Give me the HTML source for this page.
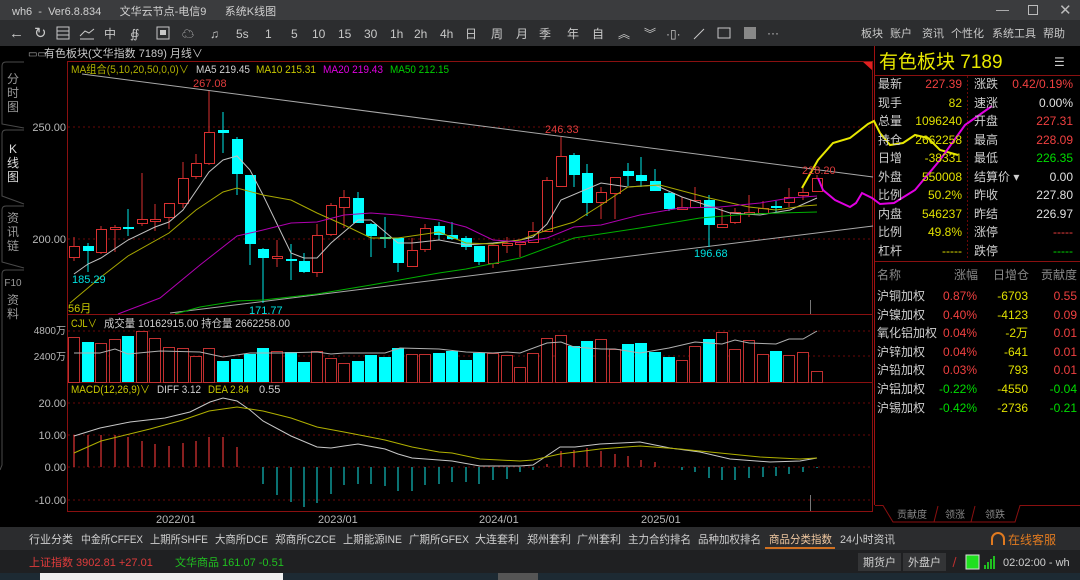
<!DOCTYPE html>
<html><head><meta charset="utf-8">
<style>
*{margin:0;padding:0;box-sizing:border-box}
body{width:1080px;height:580px;overflow:hidden;background:#000;font-family:"Liberation Sans","Noto Sans CJK SC",sans-serif;position:relative}
.a{position:absolute;white-space:nowrap}
svg text{font-family:"Liberation Sans","Noto Sans CJK SC",sans-serif}
</style></head><body>
<div class="a" style="left:0;top:0;width:1080px;height:20px;background:#3b3c3e"></div>
<div class="a" style="left:0;top:20px;width:1080px;height:26px;background:#2c2d2f"></div>
<div class="a" style="left:12px;top:3px;font-size:11px;color:#d0d0d0">wh6&nbsp; - &nbsp;Ver6.8.834&nbsp;&nbsp;&nbsp;&nbsp;&nbsp;&nbsp;文华云节点-电信9&nbsp;&nbsp;&nbsp;&nbsp;&nbsp;&nbsp;系统K线图</div>
<div class="a" style="left:996px;top:2px;font-size:13px;color:#bbb">—</div>
<div class="a" style="left:1028px;top:5px;width:10px;height:10px;border:1px solid #bbb"></div>
<div class="a" style="left:1059px;top:1px;font-size:15px;color:#bbb">✕</div>
<svg class="a" style="left:0;top:0" width="1080" height="580" viewBox="0 0 1080 580">
<g fill="#c8c8c8" font-size="12">
<text x="9" y="38" font-size="15">←</text>
<text x="34" y="38" font-size="15">↻</text>
<rect x="57" y="27" width="12" height="12" fill="none" stroke="#c8c8c8"/><line x1="57" y1="31" x2="69" y2="31" stroke="#c8c8c8"/><line x1="57" y1="35" x2="69" y2="35" stroke="#c8c8c8"/>
<polyline points="80,36 85,31 89,33 94,29" fill="none" stroke="#c8c8c8"/><line x1="80" y1="39" x2="94" y2="39" stroke="#c8c8c8"/>
<text x="104" y="38">中</text><text x="130" y="38">∯</text>
<rect x="157" y="27" width="12" height="12" fill="none" stroke="#c8c8c8"/><rect x="160" y="30" width="6" height="5"/>
<text x="182" y="38">☁</text><text x="210" y="38">♫</text>
<text x="236" y="38">5s</text><text x="265" y="38">1</text><text x="291" y="38">5</text><text x="312" y="38">10</text><text x="338" y="38">15</text><text x="364" y="38">30</text><text x="390" y="38">1h</text><text x="414" y="38">2h</text><text x="440" y="38">4h</text>
<text x="465" y="38">日</text><text x="491" y="38">周</text><text x="516" y="38">月</text><text x="539" y="38">季</text><text x="567" y="38">年</text><text x="592" y="38">自</text>
<text x="618" y="38">︽</text><text x="644" y="38">︾</text><text x="666" y="38">·▯·</text>
<line x1="694" y1="39" x2="704" y2="29" stroke="#c8c8c8"/>
<rect x="718" y="28" width="12" height="10" fill="none" stroke="#c8c8c8"/>
<rect x="744" y="27" width="12" height="12" fill="#888"/>
<text x="767" y="37">···</text>
<g font-size="11"><text x="861" y="37">板块</text><text x="890" y="37">账户</text><text x="922" y="37">资讯</text><text x="951" y="37">个性化</text><text x="992" y="37">系统工具</text><text x="1043" y="37">帮助</text></g>
</g>
<text x="28" y="57" font-size="10" fill="#aaa">▭▭</text>
<text x="44" y="57" font-size="11" fill="#c8c8c8">有色板块(文华指数  7189)    月线∨</text>
<line x1="67" y1="61.5" x2="873" y2="61.5" stroke="#a01010"/>
<polygon points="862,61 873,61 873,71" fill="#e02020"/>
<rect x="67.5" y="61.5" width="805" height="450" fill="none" stroke="#8a1010"/>
<line x1="67" y1="314.5" x2="873" y2="314.5" stroke="#8a1010"/>
<line x1="67" y1="382.5" x2="873" y2="382.5" stroke="#8a1010"/>
<line x1="874.5" y1="46" x2="874.5" y2="505" stroke="#a01010"/>
<g stroke="#6a0808" stroke-dasharray="2,3">
<line x1="68" y1="127" x2="872" y2="127"/><line x1="68" y1="239" x2="872" y2="239"/>
<line x1="68" y1="331" x2="872" y2="331"/><line x1="68" y1="356" x2="872" y2="356"/>
<line x1="68" y1="403" x2="872" y2="403"/><line x1="68" y1="435" x2="872" y2="435"/><line x1="68" y1="467" x2="872" y2="467"/><line x1="68" y1="500" x2="872" y2="500"/>
</g>
<g font-size="11" fill="#b8b8b8" text-anchor="end">
<text x="66" y="131">250.00</text><text x="66" y="243">200.00</text>
<text x="66" y="334" font-size="10">4800万</text><text x="66" y="360" font-size="10">2400万</text>
<text x="66" y="407">20.00</text><text x="66" y="439">10.00</text><text x="66" y="471">0.00</text><text x="66" y="504">-10.00</text>
</g>
<g font-size="11" fill="#b8b8b8"><text x="156" y="523">2022/01</text><text x="318" y="523">2023/01</text><text x="479" y="523">2024/01</text><text x="641" y="523">2025/01</text></g>
<g font-size="11">
<text x="71" y="73" fill="#b0b000" textLength="118" lengthAdjust="spacingAndGlyphs">MA组合(5,10,20,50,0,0)∨</text>
<text x="196" y="73" fill="#d0d0d0" textLength="54" lengthAdjust="spacingAndGlyphs">MA5 219.45</text>
<text x="256" y="73" fill="#c8c800" textLength="60" lengthAdjust="spacingAndGlyphs">MA10 215.31</text>
<text x="323" y="73" fill="#e000e0" textLength="60" lengthAdjust="spacingAndGlyphs">MA20 219.43</text>
<text x="390" y="73" fill="#00d000" textLength="59" lengthAdjust="spacingAndGlyphs">MA50 212.15</text>
<text x="71" y="327" fill="#c8c800" textLength="26" lengthAdjust="spacingAndGlyphs">CJL∨</text>
<text x="104" y="327" fill="#d0d0d0" textLength="186" lengthAdjust="spacingAndGlyphs">成交量 10162915.00  持仓量 2662258.00</text>
<text x="71" y="393" fill="#c8c800" textLength="79" lengthAdjust="spacingAndGlyphs">MACD(12,26,9)∨</text>
<text x="157" y="393" fill="#d0d0d0" textLength="44" lengthAdjust="spacingAndGlyphs">DIFF 3.12</text>
<text x="208" y="393" fill="#c8c800" textLength="41" lengthAdjust="spacingAndGlyphs">DEA 2.84</text>
<text x="259" y="393" fill="#d0d0d0">0.55</text>
</g>
<line x1="82" y1="74" x2="873" y2="177" stroke="#a8a8a8"/>
<line x1="170" y1="313" x2="873" y2="226" stroke="#a8a8a8"/>
<g stroke-width="1">
<g stroke="#d83030" fill="#000">
<line x1="74" y1="237" x2="74" y2="261"/><rect x="69.5" y="246.5" width="10" height="11"/>
<line x1="101" y1="226" x2="101" y2="254"/><rect x="96.5" y="229.5" width="10" height="23"/>
<line x1="115" y1="225" x2="115" y2="252"/><rect x="110.5" y="227.5" width="10" height="2"/>
<line x1="142" y1="173" x2="142" y2="226"/><rect x="137.5" y="219.5" width="10" height="4"/>
<line x1="155" y1="204" x2="155" y2="231"/><rect x="150.5" y="219.5" width="10" height="2"/>
<line x1="169" y1="203" x2="169" y2="229"/><rect x="164.5" y="203.5" width="10" height="14"/>
<line x1="183" y1="162" x2="183" y2="208"/><rect x="178.5" y="178.5" width="10" height="25"/>
<line x1="196" y1="154" x2="196" y2="179"/><rect x="191.5" y="163.5" width="10" height="13"/>
<line x1="209" y1="91" x2="209" y2="165"/><rect x="204.5" y="132.5" width="10" height="31"/>
<line x1="277" y1="240" x2="277" y2="267"/><rect x="272.5" y="256.5" width="10" height="2"/>
<line x1="317" y1="224" x2="317" y2="277"/><rect x="312.5" y="235.5" width="10" height="37"/>
<line x1="331" y1="203" x2="331" y2="236"/><rect x="326.5" y="205.5" width="10" height="29"/>
<line x1="344" y1="190" x2="344" y2="228"/><rect x="339.5" y="197.5" width="10" height="10"/>
<line x1="412" y1="238" x2="412" y2="267"/><rect x="407.5" y="250.5" width="10" height="16"/>
<line x1="425" y1="224" x2="425" y2="252"/><rect x="420.5" y="228.5" width="10" height="21"/>
<line x1="493" y1="245" x2="493" y2="268"/><rect x="488.5" y="245.5" width="10" height="18"/>
<line x1="507" y1="237" x2="507" y2="253"/><rect x="502.5" y="243.5" width="10" height="2"/>
<line x1="520" y1="241" x2="520" y2="257"/><rect x="515.5" y="242.5" width="10" height="2"/>
<line x1="533" y1="222" x2="533" y2="243"/><rect x="528.5" y="231.5" width="10" height="11"/>
<line x1="547" y1="177" x2="547" y2="231"/><rect x="542.5" y="180.5" width="10" height="51"/>
<line x1="561" y1="137" x2="561" y2="186"/><rect x="556.5" y="156.5" width="10" height="30"/>
<line x1="601" y1="187" x2="601" y2="219"/><rect x="596.5" y="192.5" width="10" height="10"/>
<line x1="615" y1="177" x2="615" y2="219"/><rect x="610.5" y="177.5" width="10" height="16"/>
<line x1="682" y1="197" x2="682" y2="210"/><rect x="677.5" y="207.5" width="10" height="2"/>
<line x1="695" y1="187" x2="695" y2="208"/><rect x="690.5" y="200.5" width="10" height="7"/>
<line x1="722" y1="208" x2="722" y2="228"/><rect x="717.5" y="224.5" width="10" height="3"/>
<line x1="735" y1="208" x2="735" y2="224"/><rect x="730.5" y="212.5" width="10" height="10"/>
<line x1="749" y1="195" x2="749" y2="217"/><rect x="744.5" y="212.5" width="10" height="2"/>
<line x1="763" y1="201" x2="763" y2="215"/><rect x="758.5" y="208.5" width="10" height="5"/>
<line x1="789" y1="188" x2="789" y2="207"/><rect x="784.5" y="197.5" width="10" height="5"/>
<line x1="803" y1="185" x2="803" y2="200"/><rect x="798.5" y="192.5" width="10" height="3"/>
<line x1="817" y1="175" x2="817" y2="191"/><rect x="812.5" y="178.5" width="10" height="13"/>
</g>
<g stroke="#00e8e8" fill="#00ffff">
<line x1="88" y1="243" x2="88" y2="272"/><rect x="83" y="246" width="11" height="5" stroke="none"/>
<line x1="128" y1="209" x2="128" y2="236"/><rect x="123" y="227" width="11" height="2" stroke="none"/>
<line x1="223" y1="112" x2="223" y2="153"/><rect x="218" y="130" width="11" height="3" stroke="none"/>
<line x1="237" y1="137" x2="237" y2="195"/><rect x="232" y="139" width="11" height="35" stroke="none"/>
<line x1="250" y1="175" x2="250" y2="265"/><rect x="245" y="175" width="11" height="69" stroke="none"/>
<line x1="263" y1="248" x2="263" y2="303"/><rect x="258" y="249" width="11" height="9" stroke="none"/>
<line x1="291" y1="244" x2="291" y2="280"/><rect x="286" y="259" width="11" height="2" stroke="none"/>
<line x1="304" y1="253" x2="304" y2="273"/><rect x="299" y="261" width="11" height="11" stroke="none"/>
<line x1="358" y1="192" x2="358" y2="223"/><rect x="353" y="198" width="11" height="25" stroke="none"/>
<line x1="371" y1="223" x2="371" y2="257"/><rect x="366" y="224" width="11" height="12" stroke="none"/>
<line x1="385" y1="217" x2="385" y2="248"/><rect x="380" y="237" width="11" height="2" stroke="none"/>
<line x1="398" y1="238" x2="398" y2="272"/><rect x="393" y="238" width="11" height="25" stroke="none"/>
<line x1="439" y1="222" x2="439" y2="240"/><rect x="434" y="226" width="11" height="9" stroke="none"/>
<line x1="452" y1="222" x2="452" y2="240"/><rect x="447" y="235" width="11" height="4" stroke="none"/>
<line x1="466" y1="236" x2="466" y2="250"/><rect x="461" y="238" width="11" height="9" stroke="none"/>
<line x1="479" y1="246" x2="479" y2="265"/><rect x="474" y="246" width="11" height="16" stroke="none"/>
<line x1="574" y1="153" x2="574" y2="187"/><rect x="569" y="155" width="11" height="20" stroke="none"/>
<line x1="587" y1="164" x2="587" y2="216"/><rect x="582" y="173" width="11" height="30" stroke="none"/>
<line x1="628" y1="163" x2="628" y2="186"/><rect x="623" y="171" width="11" height="5" stroke="none"/>
<line x1="641" y1="157" x2="641" y2="187"/><rect x="636" y="175" width="11" height="6" stroke="none"/>
<line x1="655" y1="169" x2="655" y2="191"/><rect x="650" y="181" width="11" height="10" stroke="none"/>
<line x1="669" y1="192" x2="669" y2="211"/><rect x="664" y="193" width="11" height="16" stroke="none"/>
<line x1="709" y1="195" x2="709" y2="247"/><rect x="704" y="200" width="11" height="25" stroke="none"/>
<line x1="776" y1="201" x2="776" y2="213"/><rect x="771" y="206" width="11" height="2" stroke="none"/>
</g>
</g>
<g fill="none" stroke-width="1">
<polyline stroke="#c0c0c0" points="74,274 88,264 101,258 128,240 155,227 169,222 183,210 209,172 223,160 237,156 250,170 263,195 291,253 304,258 317,258 331,243 358,220 371,220 398,243 412,243 439,240 466,245 493,243 520,240 533,237 547,224 561,200 601,183 628,187 655,185 682,197 709,206 730,213 760,215 790,210 817,198"/>
<polyline stroke="#a8a800" points="70,303 101,277 128,256 169,233 196,210 223,192 237,188 263,195 291,200 317,213 344,225 371,238 398,238 439,232 466,243 493,244 520,240 547,230 574,222 601,205 628,187 660,185 709,198 749,207 776,210 803,206 817,205"/>
<polyline stroke="#b000b0" points="118,314 160,298 200,265 237,236 263,230 291,223 317,222 344,215 371,213 398,215 439,220 466,227 493,240 520,242 547,238 574,227 601,225 640,215 680,208 720,207 760,203 790,198 817,196"/>
<polyline stroke="#00b000" points="175,314 200,307 237,301 263,300 317,294 371,285 439,273 466,269 520,258 574,238 640,228 700,218 749,214 780,213 817,212"/>
<polyline stroke="#e8e800" stroke-width="2" points="802,188 818,160 833,143 850,138 868,124 874,121 880,133 890,145 903,143 915,135 928,138 940,150 958,155"/>
<polyline stroke="#e000e0" stroke-width="2" points="818,178 823,190 835,200 850,207 856,203 862,193 872,198 880,204 894,203 915,190 940,160 965,125 992,106"/>
</g>
<g font-size="11">
<text x="193" y="87" fill="#e03c3c">267.08</text>
<text x="545" y="133" fill="#e03c3c">246.33</text>
<text x="802" y="174" fill="#e03c3c">228.20</text>
<text x="72" y="283" fill="#00e0e0">185.29</text>
<text x="249" y="314" fill="#00e0e0">171.77</text>
<text x="694" y="257" fill="#00e0e0">196.68</text>
<text x="68" y="312" fill="#c8c800">56月</text>
</g>
<line x1="810.5" y1="300" x2="810.5" y2="314" stroke="#777"/>
<line x1="810.5" y1="495" x2="810.5" y2="511" stroke="#777"/>
<g stroke="#c03030" fill="#000">
<rect x="68.5" y="337.5" width="11" height="45"/><rect x="95.5" y="343.5" width="11" height="39"/><rect x="109.5" y="339.5" width="11" height="43"/>
<rect x="136.5" y="331.5" width="11" height="51"/><rect x="149.5" y="338.5" width="11" height="44"/><rect x="163.5" y="347.5" width="11" height="35"/>
<rect x="177.5" y="348.5" width="11" height="34"/><rect x="190.5" y="356.5" width="11" height="26"/><rect x="203.5" y="348.5" width="11" height="34"/>
<rect x="271.5" y="351.5" width="11" height="31"/><rect x="311.5" y="351.5" width="11" height="31"/><rect x="325.5" y="358.5" width="11" height="24"/><rect x="338.5" y="363.5" width="11" height="19"/>
<rect x="406.5" y="354.5" width="11" height="28"/><rect x="419.5" y="354.5" width="11" height="28"/>
<rect x="487.5" y="353.5" width="11" height="29"/><rect x="501.5" y="355.5" width="11" height="27"/><rect x="514.5" y="367.5" width="11" height="15"/><rect x="527.5" y="353.5" width="11" height="29"/>
<rect x="541.5" y="338.5" width="11" height="44"/><rect x="555.5" y="335.5" width="11" height="47"/><rect x="595.5" y="339.5" width="11" height="43"/><rect x="609.5" y="349.5" width="11" height="33"/>
<rect x="676.5" y="360.5" width="11" height="22"/><rect x="689.5" y="346.5" width="11" height="36"/><rect x="716.5" y="332.5" width="11" height="50"/><rect x="729.5" y="349.5" width="11" height="33"/>
<rect x="743.5" y="340.5" width="11" height="42"/><rect x="757.5" y="354.5" width="11" height="28"/><rect x="783.5" y="355.5" width="11" height="27"/><rect x="797.5" y="352.5" width="11" height="30"/><rect x="811.5" y="371.5" width="11" height="11"/>
</g>
<g fill="#00ffff">
<rect x="82" y="342" width="12" height="40"/><rect x="122" y="336" width="12" height="46"/><rect x="217" y="361" width="12" height="21"/>
<rect x="231" y="359" width="12" height="23"/><rect x="244" y="354" width="12" height="28"/><rect x="257" y="348" width="12" height="34"/>
<rect x="285" y="352" width="12" height="30"/><rect x="298" y="362" width="12" height="20"/><rect x="352" y="361" width="12" height="21"/>
<rect x="365" y="355" width="12" height="27"/><rect x="379" y="357" width="12" height="25"/><rect x="392" y="348" width="12" height="34"/>
<rect x="433" y="353" width="12" height="29"/><rect x="446" y="351" width="12" height="31"/><rect x="460" y="360" width="12" height="22"/><rect x="473" y="353" width="12" height="29"/>
<rect x="568" y="346" width="12" height="36"/><rect x="581" y="341" width="12" height="41"/><rect x="622" y="344" width="12" height="38"/><rect x="635" y="343" width="12" height="39"/>
<rect x="649" y="352" width="12" height="30"/><rect x="663" y="357" width="12" height="25"/><rect x="703" y="339" width="12" height="43"/><rect x="770" y="351" width="12" height="31"/>
</g>
<polyline fill="none" stroke="#b0b0b0" points="74,353 100,353 115,349 128,354 160,351 200,352 223,357 250,353 280,353 317,352 331,354 344,353 385,353 400,348 439,349 466,352 493,353 507,352 520,353 547,343 561,342 574,347 601,349 615,349 640,353 669,348 695,342 722,344 735,340 749,343 776,344 789,339 803,339 817,331"/>
<g stroke="#d03030" stroke-width="1.3">
<line x1="74" y1="467" x2="74" y2="435"/><line x1="88" y1="467" x2="88" y2="435"/><line x1="101" y1="467" x2="101" y2="435"/><line x1="115" y1="467" x2="115" y2="435"/>
<line x1="128" y1="467" x2="128" y2="437"/><line x1="142" y1="467" x2="142" y2="441"/><line x1="155" y1="467" x2="155" y2="444"/><line x1="169" y1="467" x2="169" y2="446"/>
<line x1="183" y1="467" x2="183" y2="443"/><line x1="196" y1="467" x2="196" y2="441"/><line x1="209" y1="467" x2="209" y2="437"/><line x1="223" y1="467" x2="223" y2="437"/><line x1="237" y1="467" x2="237" y2="447"/>
<line x1="547" y1="467" x2="547" y2="464"/><line x1="561" y1="467" x2="561" y2="451"/><line x1="574" y1="467" x2="574" y2="450"/><line x1="587" y1="467" x2="587" y2="448"/>
<line x1="601" y1="467" x2="601" y2="451"/><line x1="615" y1="467" x2="615" y2="454"/><line x1="628" y1="467" x2="628" y2="456"/><line x1="641" y1="467" x2="641" y2="460"/><line x1="655" y1="467" x2="655" y2="462"/>
</g>
<g stroke="#10b0b0" stroke-width="1.3">
<line x1="263" y1="467" x2="263" y2="484"/><line x1="277" y1="467" x2="277" y2="495"/><line x1="291" y1="467" x2="291" y2="502"/><line x1="304" y1="467" x2="304" y2="507"/>
<line x1="317" y1="467" x2="317" y2="503"/><line x1="331" y1="467" x2="331" y2="494"/><line x1="344" y1="467" x2="344" y2="485"/><line x1="358" y1="467" x2="358" y2="484"/>
<line x1="371" y1="467" x2="371" y2="484"/><line x1="385" y1="467" x2="385" y2="486"/><line x1="398" y1="467" x2="398" y2="491"/><line x1="412" y1="467" x2="412" y2="491"/>
<line x1="425" y1="467" x2="425" y2="485"/><line x1="439" y1="467" x2="439" y2="484"/><line x1="452" y1="467" x2="452" y2="482"/><line x1="466" y1="467" x2="466" y2="482"/>
<line x1="479" y1="467" x2="479" y2="484"/><line x1="493" y1="467" x2="493" y2="480"/><line x1="507" y1="467" x2="507" y2="479"/><line x1="520" y1="467" x2="520" y2="472"/><line x1="533" y1="467" x2="533" y2="470"/>
<line x1="682" y1="467" x2="682" y2="470"/><line x1="695" y1="467" x2="695" y2="472"/><line x1="709" y1="467" x2="709" y2="478"/><line x1="722" y1="467" x2="722" y2="480"/>
<line x1="735" y1="467" x2="735" y2="480"/><line x1="749" y1="467" x2="749" y2="478"/><line x1="763" y1="467" x2="763" y2="477"/><line x1="776" y1="467" x2="776" y2="476"/>
<line x1="789" y1="467" x2="789" y2="474"/><line x1="803" y1="467" x2="803" y2="472"/><line x1="817" y1="467" x2="817" y2="468"/>
</g>
<polyline fill="none" stroke="#c8c8c8" points="74,436 100,428 130,422 165,418 190,412 210,402 223,398 237,401 250,410 263,421 291,436 317,447 331,448 344,446 358,444 385,449 398,454 412,458 439,460 452,461 480,466 520,466 533,465 560,447 575,447 600,444 640,442 670,448 700,452 730,459 770,462 800,461 817,458"/>
<polyline fill="none" stroke="#b0b000" points="74,453 101,441 150,429 183,420 209,411 237,407 263,411 291,418 317,427 344,432 385,440 412,447 439,452 452,453 480,459 520,461 533,460 560,454 600,449 640,446 680,449 720,453 760,457 800,459 817,458"/>
<g fill="none" stroke="#4a4a4a">
<path d="M24,62 L6,62 Q2,62 2,66 L2,124 L24,128"/>
<path d="M24,130 L6,130 Q2,130 2,134 L2,196 L24,204"/>
<path d="M24,206 L6,206 Q2,206 2,210 L2,262 L24,268"/>
<path d="M24,270 L6,270 Q2,270 2,274 L2,465 L0,470"/>
</g>
<g font-size="12" fill="#9a9a9a" text-anchor="middle">
<text x="13" y="83">分</text><text x="13" y="97">时</text><text x="13" y="111">图</text>
<text x="13" y="153" fill="#dcdcdc">K</text><text x="13" y="167" fill="#dcdcdc">线</text><text x="13" y="181" fill="#dcdcdc">图</text>
<text x="13" y="222">资</text><text x="13" y="236">讯</text><text x="13" y="250">链</text>
<text x="13" y="286" font-size="10">F10</text><text x="13" y="304">资</text><text x="13" y="318">料</text>
</g>
<text x="879" y="68" font-size="19" fill="#e8e800">有色板块  7189</text>
<text x="1054" y="66" font-size="12" fill="#ccc">☰</text>
<line x1="875" y1="75.5" x2="1080" y2="75.5" stroke="#8a1010"/>
<line x1="967.5" y1="76" x2="967.5" y2="260" stroke="#6a0808" stroke-dasharray="2,2"/>
<line x1="875" y1="261.5" x2="1080" y2="261.5" stroke="#8a1010"/>
<g font-size="12">
<g fill="#cfcfcf">
<text x="878" y="88">最新</text><text x="878" y="107">现手</text><text x="878" y="125">总量</text><text x="878" y="144">持仓</text><text x="878" y="162">日增</text>
<text x="878" y="181">外盘</text><text x="878" y="199">比例</text><text x="878" y="218">内盘</text><text x="878" y="236">比例</text><text x="878" y="255">杠杆</text>
<text x="974" y="88">涨跌</text><text x="974" y="107">速涨</text><text x="974" y="125">开盘</text><text x="974" y="144">最高</text><text x="974" y="162">最低</text>
<text x="974" y="181">结算价 ▾</text><text x="974" y="199">昨收</text><text x="974" y="218">昨结</text><text x="974" y="236">涨停</text><text x="974" y="255">跌停</text>
</g>
<g text-anchor="end">
<text x="962" y="88" fill="#f04040">227.39</text>
<g fill="#e0e000"><text x="962" y="107">82</text><text x="962" y="125">1096240</text><text x="962" y="144">2662258</text><text x="962" y="162">-38331</text><text x="962" y="181">550008</text><text x="962" y="199">50.2%</text><text x="962" y="218">546237</text><text x="962" y="236">49.8%</text><text x="962" y="255">-----</text></g>
<text x="1073" y="88" fill="#f04040">0.42/0.19%</text>
<text x="1073" y="107" fill="#e0e0e0">0.00%</text>
<text x="1073" y="125" fill="#f04040">227.31</text>
<text x="1073" y="144" fill="#f04040">228.09</text>
<text x="1073" y="162" fill="#00dd00">226.35</text>
<text x="1073" y="181" fill="#e0e0e0">0.00</text>
<text x="1073" y="199" fill="#e0e0e0">227.80</text>
<text x="1073" y="218" fill="#e0e0e0">226.97</text>
<text x="1073" y="236" fill="#f04040">-----</text>
<text x="1073" y="255" fill="#00dd00">-----</text>
</g>
<g fill="#888"><text x="877" y="279">名称</text><text x="978" y="279" text-anchor="end">涨幅</text><text x="1029" y="279" text-anchor="end">日增仓</text><text x="1077" y="279" text-anchor="end">贡献度</text></g>
<g fill="#cfcfcf"><text x="877" y="300">沪铜加权</text><text x="877" y="319">沪镍加权</text><text x="877" y="337">氧化铝加权</text><text x="877" y="356">沪锌加权</text><text x="877" y="374">沪铅加权</text><text x="877" y="393">沪铝加权</text><text x="877" y="412">沪锡加权</text></g>
<g text-anchor="end">
<g fill="#f04040"><text x="977" y="300">0.87%</text><text x="977" y="319">0.40%</text><text x="977" y="337">0.04%</text><text x="977" y="356">0.04%</text><text x="977" y="374">0.03%</text>
<text x="1077" y="300">0.55</text><text x="1077" y="319">0.09</text><text x="1077" y="337">0.01</text><text x="1077" y="356">0.01</text><text x="1077" y="374">0.01</text></g>
<g fill="#00dd00"><text x="977" y="393">-0.22%</text><text x="977" y="412">-0.42%</text><text x="1077" y="393">-0.04</text><text x="1077" y="412">-0.21</text></g>
<g fill="#e0e000"><text x="1028" y="300">-6703</text><text x="1028" y="319">-4123</text><text x="1028" y="337">-2万</text><text x="1028" y="356">-641</text><text x="1028" y="374">793</text><text x="1028" y="393">-4550</text><text x="1028" y="412">-2736</text></g>
</g>
</g>
<path d="M875,505.5 L883,505.5 L893,522 L1015,522 L1020,505.5 L1080,505.5" fill="none" stroke="#8a1010"/>
<line x1="938" y1="506" x2="934" y2="522" stroke="#8a1010"/><line x1="975" y1="506" x2="971" y2="522" stroke="#8a1010"/>
<g font-size="10" fill="#888"><text x="897" y="518">贡献度</text><text x="945" y="518">领涨</text><text x="985" y="518">领跌</text></g>
<rect x="0" y="527" width="1080" height="23" fill="#2b2c2e"/>
<rect x="0" y="550" width="1080" height="23" fill="#1f2022"/>
<rect x="0" y="573" width="1080" height="7" fill="#1d2a33"/>
<rect x="40" y="573" width="243" height="7" fill="#f0f0f0"/>
<rect x="498" y="573" width="40" height="7" fill="#555"/>
<g font-size="11" fill="#cfcfcf">
<text x="29" y="543" textLength="44" lengthAdjust="spacingAndGlyphs">行业分类</text>
<text x="81" y="543" textLength="62" lengthAdjust="spacingAndGlyphs">中金所CFFEX</text>
<text x="150" y="543" textLength="58" lengthAdjust="spacingAndGlyphs">上期所SHFE</text>
<text x="215" y="543" textLength="53" lengthAdjust="spacingAndGlyphs">大商所DCE</text>
<text x="275" y="543" textLength="61" lengthAdjust="spacingAndGlyphs">郑商所CZCE</text>
<text x="343" y="543" textLength="59" lengthAdjust="spacingAndGlyphs">上期能源INE</text>
<text x="409" y="543" textLength="60" lengthAdjust="spacingAndGlyphs">广期所GFEX</text>
<text x="475" y="543" textLength="44" lengthAdjust="spacingAndGlyphs">大连套利</text>
<text x="527" y="543" textLength="44" lengthAdjust="spacingAndGlyphs">郑州套利</text>
<text x="577" y="543" textLength="44" lengthAdjust="spacingAndGlyphs">广州套利</text>
<text x="628" y="543" textLength="63" lengthAdjust="spacingAndGlyphs">主力合约排名</text>
<text x="698" y="543" textLength="63" lengthAdjust="spacingAndGlyphs">品种加权排名</text>
<text x="769" y="543" fill="#f0c8a0" textLength="63" lengthAdjust="spacingAndGlyphs">商品分类指数</text>
<text x="840" y="543" textLength="55" lengthAdjust="spacingAndGlyphs">24小时资讯</text>
</g>
<rect x="765" y="547" width="70" height="2" fill="#d07020"/>
<path d="M992,545 L992,539 A6,6 0 0 1 1004,539 L1004,545" fill="none" stroke="#e07a20" stroke-width="2"/>
<text x="1008" y="544" font-size="12" fill="#e07a20">在线客服</text>
<g font-size="11"><text x="29" y="566" fill="#e03c3c">上证指数 3902.81 +27.01</text><text x="175" y="566" fill="#20c020">文华商品 161.07 -0.51</text></g>
<rect x="858" y="553" width="43" height="18" fill="#333436"/><rect x="903" y="553" width="43" height="18" fill="#333436"/>
<g font-size="11" fill="#cfcfcf"><text x="863" y="566">期货户</text><text x="908" y="566">外盘户</text></g>
<line x1="953" y1="567" x2="956" y2="557" stroke="#c03030"/>
<rect x="966" y="555" width="13" height="14" fill="#20e020" stroke="#ddd"/>
<g fill="#20c020"><rect x="984" y="565" width="2" height="4"/><rect x="987" y="562" width="2" height="7"/><rect x="990" y="559" width="2" height="10"/><rect x="993" y="556" width="2" height="13"/></g>
<text x="1003" y="566" font-size="11" fill="#cfcfcf">02:02:00 - wh</text>
</svg>
</body></html>
